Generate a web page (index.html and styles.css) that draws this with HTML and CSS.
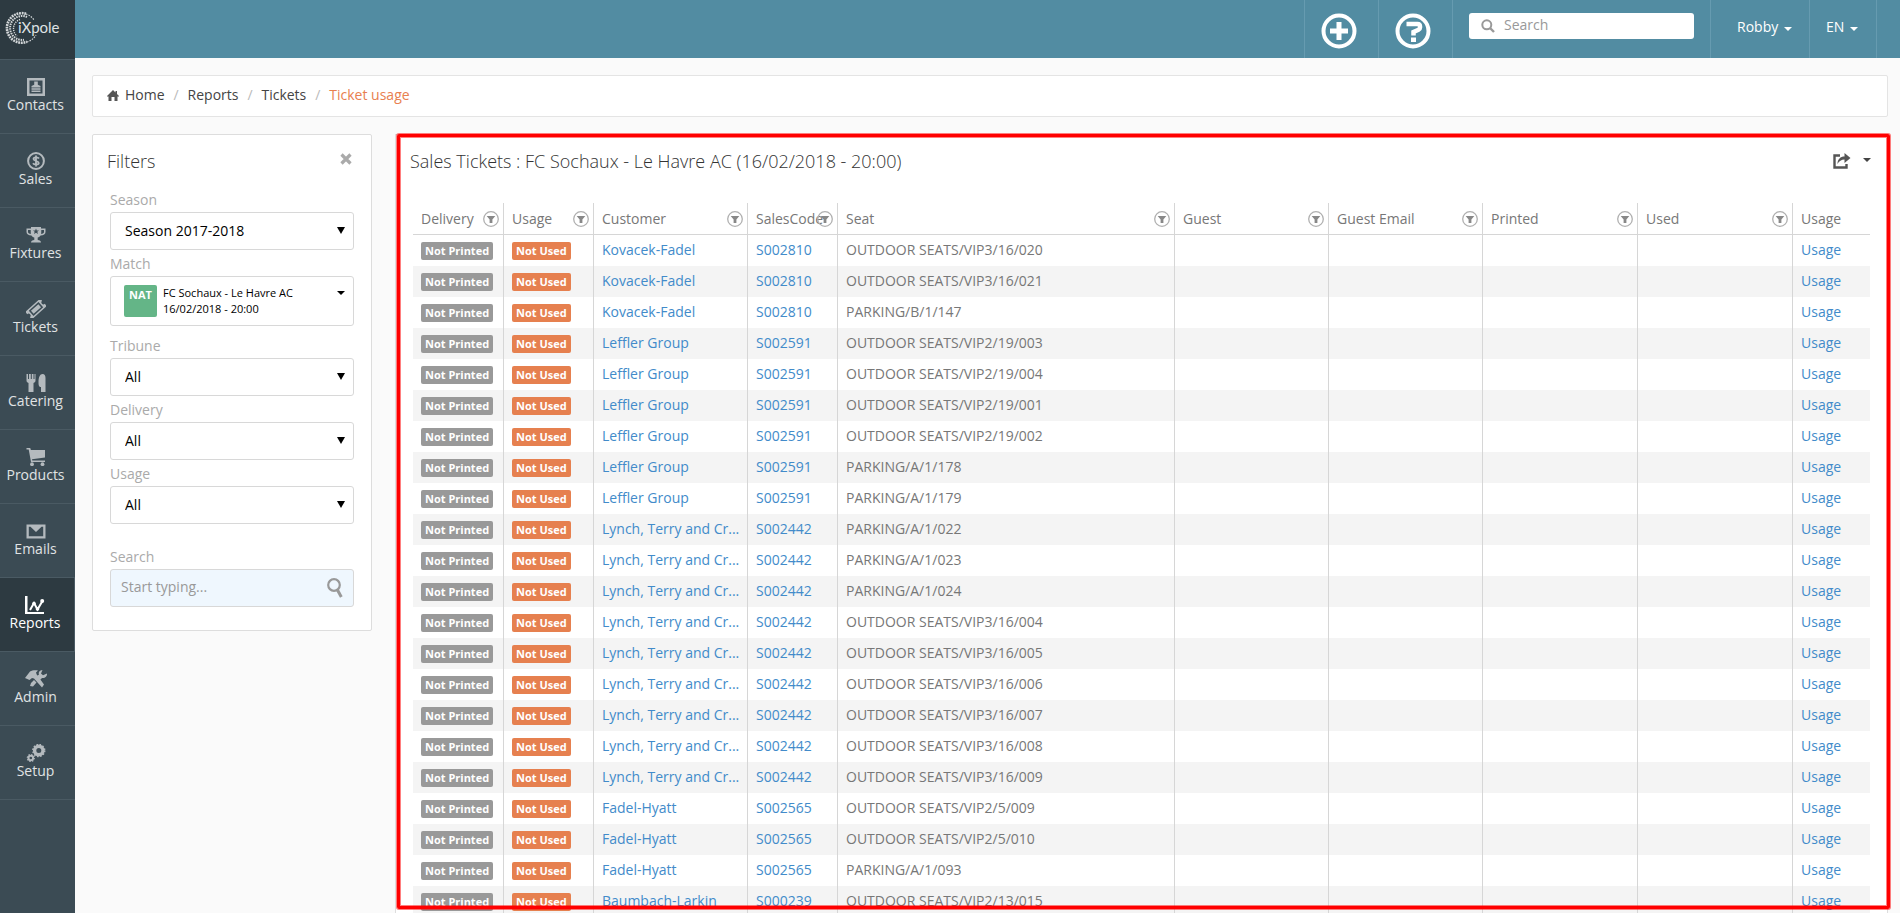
FILE: index.html
```html
<!DOCTYPE html>
<html lang="en">
<head>
<meta charset="utf-8">
<title>Ticket usage</title>
<link rel="stylesheet" href="styles.css">
</head>
<body>
<svg class="defs" aria-hidden="true">
  <symbol id="filter" viewBox="0 0 16 16"><circle cx="8" cy="8" r="7.300" fill="none" stroke="#b0b0b0" stroke-width="1.300"/><path d="M3.700 5h8.600L9.400 8.600V12H6.600V8.600z" fill="#888"/></symbol>
</svg>
<nav class="sidebar">
  <a class="logo" href="#" aria-label="iXpole">
    <svg viewBox="0 0 60 36" width="60" height="36">
      <g fill="none" stroke="#d3d7d9">
        <path d="M22 3.800A14.800 14.800 0 1 0 23 31.800" stroke-width="2.600" stroke-dasharray="1.800 .8"/>
        <path d="M23 7A12 12 0 1 0 20 29.800" stroke-width="2" stroke-dasharray="1.500 .9"/>
        <path d="M16 9.500A9.600 9.600 0 0 0 13 26" stroke-width="1.400" stroke-dasharray="1.200 1"/>
        <path d="M22 4A15 15 0 0 1 30 10M23 32A15 15 0 0 0 32 25" stroke-width="1.200" stroke-dasharray="1.500 1.200"/>
      </g>
      <text class="logo-text" x="14" y="23">iXpole</text>
    </svg>
  </a>
  <a class="item" href="#"><svg viewBox="0 0 20 18"><path fill-rule="evenodd" d="M1 0h18v18H1zM3.500 2.500v13h13v-13z"/><path d="M8.200 3.500h3.600v3.300L14.500 8v1.500h-9V8l2.700-1.200zM5.500 10.300h9v1.500h-9zM5.500 12.600h9v1.500h-9z"/></svg>Contacts</a>
  <a class="item" href="#"><svg viewBox="0 0 20 18"><circle cx="10" cy="9" r="7.900" fill="none" stroke="currentColor" stroke-width="2"/><path d="M13 6.500C12 4.800 7.500 4.800 7.500 7S12.800 8.800 12.800 11 8 13 7 11.300M10 3.500v11" fill="none" stroke="currentColor" stroke-width="1.800"/></svg>Sales</a>
  <a class="item" href="#"><svg viewBox="0 0 20 18"><path fill-rule="evenodd" d="M5 1h10v1.500h4.500V6c0 2-2 3.500-5 3.500-.6 1-1.500 1.700-2.800 2v2.500c2 .3 3.300 1 3.300 2.500H5c0-1.500 1.300-2.200 3.300-2.500v-2.500c-1.300-.3-2.200-1-2.800-2-3 0-5-1.500-5-3.500V2.500H5zM2 4v2c0 1 1.200 1.700 2.800 1.900L4.700 4zM18 4h-2.700l-.1 3.900C16.800 7.700 18 7 18 6zM10 2.500l-.8 2H7l1.700 1.300L8 8l2-1.300L12 8l-.7-2.200L13 4.500h-2.200z"/></svg>Fixtures</a>
  <a class="item" href="#"><svg viewBox="0 0 20 18"><g transform="rotate(-42 10 9)"><path fill-rule="evenodd" d="M0 4h20v3a2 2 0 0 0 0 4v3H0v-3a2 2 0 0 0 0-4zM3.500 5.500v7h13v-7zM5 7h10v4H5z"/></g></svg>Tickets</a>
  <a class="item" href="#"><svg viewBox="0 0 20 18"><path d="M.500 0H2v5h1V0h1.800v5h1V0h1.700v5h1V0H9.500v6.500C9.500 8 8.500 8.500 7.500 9v9h-5V9C1.500 8.500.500 8 .500 6.500zM14 13c-1.300-1-1.500-2-1.500-5 0-5 1.500-8 4-8 2.300 0 3 2 3 4v14H15v-5z"/></svg>Catering</a>
  <a class="item" href="#"><svg viewBox="0 0 20 18"><path d="M.500 0h3.700l.7 2H19v7.500L6 11.300l.3 1.200H19V14H5L2.700 1.500H.500z"/><circle cx="6" cy="16.200" r="1.900"/><circle cx="16.500" cy="16.200" r="1.900"/></svg>Products</a>
  <a class="item" href="#"><svg viewBox="0 0 20 18"><path fill-rule="evenodd" d="M.500 2.500h19v14H.500zM2.800 4.800v9.400h14.400V4.800h-1.700L10 10 4.500 4.800z"/></svg>Emails</a>
  <a class="item active" href="#" aria-current="page"><svg viewBox="0 0 20 18"><path d="M0 0h2.500v16H19v2H0z"/><path d="M5 14l4-7 3.500 6.500L17.500 5" fill="none" stroke="currentColor" stroke-width="2"/><circle cx="9" cy="7.500" r="1.800"/><circle cx="12.500" cy="13" r="1.800"/><circle cx="17.200" cy="5" r="2"/></svg>Reports</a>
  <a class="item" href="#"><svg viewBox="0 0 24 18" class="wide"><path d="M6 1.500C8 .300 11 0 14 .500l-2 2 .7 2L20 14.500 18 17.500l-8-9-2-.5-2.500 2L1 8zM13 6l2-1.500c-.8-2 .5-4.200 3.500-4.500L17 3.500l2 1.800L23 3.500c.3 2.500-2 5-5 4.500l-1.500 1.500zM7 13l3-3 2.500 2.500-3.500 4-3-.5z"/></svg>Admin</a>
  <a class="item" href="#"><svg viewBox="0 0 20 18"><circle cx="12.800" cy="6.500" r="4.200" fill="none" stroke="currentColor" stroke-width="3.400"/><circle cx="12.800" cy="6.500" r="6" fill="none" stroke="currentColor" stroke-width="1.400" stroke-dasharray="1.570 1.570"/><circle cx="4.800" cy="14" r="2.300" fill="none" stroke="currentColor" stroke-width="2"/><circle cx="4.800" cy="14" r="3.500" fill="none" stroke="currentColor" stroke-width="1.200" stroke-dasharray="1.370 1.370"/></svg>Setup</a>
</nav>
<div class="page">
  <header class="topbar">
    <button class="round" aria-label="Add"><svg viewBox="0 0 36 36"><circle cx="18" cy="18" r="15.500" fill="none" stroke="#fff" stroke-width="4"/><path d="M18 9v18M9 18h18" stroke="#fff" stroke-width="5"/></svg></button>
    <button class="round" aria-label="Help"><svg viewBox="0 0 36 36"><circle cx="18" cy="18" r="15.500" fill="none" stroke="#fff" stroke-width="4"/><path d="M11.500 11h11q2.500 0 2.500 2.500v1q0 1.500-1.500 2.200L18.500 19v3.500" fill="none" stroke="#fff" stroke-width="4.500"/><path d="M16 24.500h5V29h-5z" fill="#fff"/></svg></button>
    <div class="search-cell"><label class="search"><svg viewBox="0 0 14 14"><circle cx="5.800" cy="5.800" r="4.500" fill="none" stroke="#999" stroke-width="2"/><path d="M9 9l4 4" stroke="#999" stroke-width="2.400"/></svg><input type="text" placeholder="Search" aria-label="Search"></label></div>
    <button class="menu user">Robby <i class="caret"></i></button>
    <button class="menu lang">EN <i class="caret"></i></button>
  </header>
  <main class="content">
    <nav class="crumbs" aria-label="Breadcrumb">
      <svg viewBox="0 0 12 11"><path d="M6 0l2.500 2.500V1H10v3l2 2v.5h-1.500V11H7.500V7h-3v4h-3V6.500H0V6z" fill="#555"/></svg>
      <a href="#">Home</a><span class="sep">/</span><a href="#">Reports</a><span class="sep">/</span><a href="#">Tickets</a><span class="sep">/</span><span class="current">Ticket usage</span>
    </nav>
    <div class="columns">
      <aside class="filters">
        <div class="filters-head"><h2>Filters</h2><button class="close" aria-label="Close"><svg viewBox="0 0 12 12"><path d="M1.500 1.500l9 9M10.500 1.500l-9 9" stroke="#aaa" stroke-width="3.200"/></svg></button></div>
        <div class="form">
          <label for="season">Season</label>
          <div class="select"><select id="season"><option>Season 2017-2018</option></select></div>
          <label for="match">Match</label>
          <button class="match" id="match"><span class="nat">NAT</span><span class="match-text">FC Sochaux - Le Havre AC<br>16/02/2018 - 20:00</span><i class="caret"></i></button>
          <label for="tribune">Tribune</label>
          <div class="select"><select id="tribune"><option>All</option></select></div>
          <label for="delivery">Delivery</label>
          <div class="select"><select id="delivery"><option>All</option></select></div>
          <label for="usage">Usage</label>
          <div class="select"><select id="usage"><option>All</option></select></div>
          <label for="find" class="find-label">Search</label>
          <div class="find"><input id="find" type="text" placeholder="Start typing..."><svg viewBox="0 0 16 20"><circle cx="7" cy="7" r="5.800" fill="none" stroke="#999" stroke-width="2.200"/><path d="M10.500 12l3.800 7" stroke="#999" stroke-width="3"/></svg></div>
        </div>
      </aside>
      <section class="report">
        <div class="report-head"><h1>Sales Tickets : FC Sochaux - Le Havre AC (16/02/2018 - 20:00)</h1>
          <button class="share" aria-label="Export"><svg viewBox="0 0 18 16"><path d="M7 2.500H1.500v12h12V11" fill="none" stroke="#555" stroke-width="2.400"/><path d="M4.500 11c0-5 3-7.500 7-7.500V0l6 5-6 5V6.500c-3 0-5.500 1.500-7 4.500z" fill="#555"/></svg><i class="caret"></i></button></div>
        <table>
          <colgroup><col class="c-del"><col class="c-90"><col class="c-154"><col class="c-90"><col><col class="c-154"><col class="c-154"><col class="c-155"><col class="c-155"><col class="c-last"></colgroup>
          <thead><tr id="head"></tr></thead>
          <tbody id="rows"></tbody>
        </table>
      </section>
    </div>
  </main>
</div>
<script src="script.js"></script>
</body>
</html>
```
FILE: styles.css
```css
*, *::before, *::after { box-sizing: border-box; }
body { margin: 0; height: 100vh; overflow: hidden; display: flex; font: 14px/20px "Open Sans", "Liberation Sans", sans-serif; color: #777; background: #fafafa; }
button, input, select { font: inherit; color: inherit; }
button { border: 0; background: none; padding: 0; cursor: pointer; }
a { color: #428bca; text-decoration: none; }
h1, h2 { margin: 0; font-size: 18px; line-height: 24px; font-weight: 300; color: #333; }
.defs { position: absolute; width: 0; height: 0; }
.caret { display: inline-block; border: 4px solid transparent; border-top-color: currentColor; border-bottom: 0; }

.sidebar { flex: none; width: 75px; background: #3b4b54; }
.logo { display: block; height: 60px; padding: 10px 0 0 4px; background: #2d3a41; border-bottom: 1px solid #4a5a63; }
.logo-text { font-family: Lato, sans-serif; font-size: 15px; fill: #dfe2e4; }
.item { display: flex; flex-direction: column; align-items: center; height: 74px; padding: 18px 4px 0 0; border-bottom: 1px solid #4a5a63; color: #e0e3e4; line-height: 18px; }
.item svg { width: 20px; height: 18px; fill: currentColor; color: #b4babe; }
.item svg.wide { width: 24px; }
.item.active { background: #2d3a41; color: #fff; border-right: 1px solid #4a5a63; }
.item.active svg { color: #fff; }

.page { flex: 1; min-width: 0; }
.topbar { display: flex; justify-content: flex-end; height: 58px; padding-right: 23px; background: #528ca2; color: #fff; }
.topbar > * { border-left: 1px solid #669bb0; }
.round { width: 74px; padding-top: 4px; }
.round svg { display: block; width: 36px; height: 36px; margin-left: 16px; }
.search-cell { width: 258px; padding: 13px 16px; }
.search { display: flex; align-items: center; width: 225px; height: 26px; padding-left: 12px; border-radius: 3px; background: #fff; color: #999; }
.search svg { flex: none; width: 14px; height: 14px; margin-right: 9px; }
.search input { width: 100%; height: 22px; border: 0; padding: 0 0 3px; background: none; outline: 0; }
input::placeholder { color: #999; opacity: 1; }
.menu { text-align: left; padding-bottom: 4px; }
.user { width: 99px; padding-left: 26px; }
.lang { width: 68px; padding-left: 16px; border-right: 1px solid #669bb0; }
.menu .caret { margin-left: 2px; vertical-align: 1px; }

.content { padding: 17px 12px 0 17px; }
.crumbs { display: flex; align-items: center; height: 42px; padding: 0 14px 2px; border: 1px solid #e4e4e4; border-radius: 2px; background: #fff; }
.crumbs a { color: #444; }
.crumbs svg { width: 12px; height: 11px; margin-right: 6px; }
.crumbs .sep { width: 23px; text-align: center; color: #bbb; }
.crumbs .current { color: #e8804f; }
.columns { display: flex; align-items: flex-start; gap: 23px; margin-top: 17px; }

.filters { flex: none; width: 280px; padding: 14px 17px 23px; border: 1px solid #ddd; border-radius: 2px; background: #fff; }
.filters-head { display: flex; justify-content: space-between; align-items: center; margin-left: -3px; }
.close { width: 16px; height: 16px; margin: 0 0 4px; }
.close svg { width: 12px; height: 12px; display: block; margin: 2px auto; }
.form { padding-top: 17px; }
.form label { display: block; height: 22px; color: #aaa; }
.select { position: relative; margin-bottom: 4px; }
.select select { display: block; width: 100%; height: 38px; padding: 0 14px 1px; border: 1px solid #d8d8d8; border-radius: 3px; background: #fff; color: #000; appearance: none; }
.select::after { content: ""; position: absolute; right: 9px; top: 15px; border: 4px solid transparent; border-top: 7px solid #000; border-bottom: 0; pointer-events: none; }
.match { display: flex; width: 100%; height: 50px; padding: 8px 8px 0 13px; margin-bottom: 10px; border: 1px solid #d8d8d8; border-radius: 3px; color: #000; text-align: left; font-size: 11px; line-height: 16px; }
.nat { flex: none; width: 33px; height: 32px; padding-top: 2px; margin-right: 6px; border-radius: 2px; background: #64b587; color: #fff; font-size: 11px; font-weight: 700; text-align: center; }
.match-text { flex: 1; }
.match .caret { margin-top: 6px; }
.form .find-label { margin-top: 23px; }
.find { position: relative; }
.find input { display: block; width: 100%; height: 38px; padding: 0 40px 3px 10px; border: 1px solid #d8d8d8; border-radius: 3px; background: #eff7fe; }
.find svg { position: absolute; right: 11px; top: 9px; width: 16px; height: 20px; }

.report { position: relative; flex: 1; min-width: 0; padding: 14px 17px 0; border: 1px solid #ddd; background: #fff; }
.report::after { content: ""; position: absolute; left: 1px; right: -3px; top: -1px; height: 775px; border: 3px solid #f00; border-radius: 2px; box-shadow: 0 0 0 1px rgba(255, 0, 0, .5), inset 0 0 0 1px rgba(255, 0, 0, .5); pointer-events: none; }
.report-head { display: flex; justify-content: space-between; margin: 0 -1px 30px -3px; }
.share { display: flex; align-items: center; gap: 12px; color: #444; height: 24px; }
.share svg { width: 18px; height: 16px; }
.share .caret { margin-bottom: 3px; }
table { width: 100%; table-layout: fixed; border-collapse: separate; border-spacing: 0; }
.c-del { width: 91px; }
.c-90 { width: 90px; }
.c-154 { width: 154px; }
.c-155 { width: 155px; }
.c-last { width: 77px; }
th, td { height: 31px; padding: 0 0 1px 8px; border-right: 1px solid #d6d6d6; text-align: left; font-weight: 400; white-space: nowrap; }
th:last-child, td:last-child { border-right: 0; }
th { height: 32px; padding: 0; border-bottom: 1px solid #d6d6d6; }
.th { display: flex; align-items: center; padding-left: 8px; }
.th span { flex: 1; width: 0; }
.th svg { flex: none; width: 16px; height: 16px; margin-right: 4px; }
tbody tr:nth-child(even) { background: #f4f4f4; }
.tag { display: inline-block; height: 18px; padding: 0 4px; border-radius: 2px; color: #fff; font-size: 11px; line-height: 18px; font-weight: 700; vertical-align: middle; }
.grey { background: #999; }
.orange { background: #e6804f; }
```
FILE: script.js
```js
const columns = ['Delivery', 'Usage', 'Customer', 'SalesCode', 'Seat', 'Guest', 'Guest Email', 'Printed', 'Used', 'Usage'];
const funnel = '<svg aria-hidden="true"><use href="#filter"/></svg>';
document.getElementById('head').innerHTML = columns
  .map((c, i) => `<th scope="col"><div class="th"><span>${c}</span>${i < 9 ? funnel : ''}</div></th>`).join('');

const orders = [
  ['Kovacek-Fadel', 'S002810', ['OUTDOOR SEATS/VIP3/16/020', 'OUTDOOR SEATS/VIP3/16/021', 'PARKING/B/1/147']],
  ['Leffler Group', 'S002591', ['OUTDOOR SEATS/VIP2/19/003', 'OUTDOOR SEATS/VIP2/19/004', 'OUTDOOR SEATS/VIP2/19/001', 'OUTDOOR SEATS/VIP2/19/002', 'PARKING/A/1/178', 'PARKING/A/1/179']],
  ['Lynch, Terry and Cr...', 'S002442', ['PARKING/A/1/022', 'PARKING/A/1/023', 'PARKING/A/1/024', 'OUTDOOR SEATS/VIP3/16/004', 'OUTDOOR SEATS/VIP3/16/005', 'OUTDOOR SEATS/VIP3/16/006', 'OUTDOOR SEATS/VIP3/16/007', 'OUTDOOR SEATS/VIP3/16/008', 'OUTDOOR SEATS/VIP3/16/009']],
  ['Fadel-Hyatt', 'S002565', ['OUTDOOR SEATS/VIP2/5/009', 'OUTDOOR SEATS/VIP2/5/010', 'PARKING/A/1/093']],
  ['Baumbach-Larkin', 'S000239', ['OUTDOOR SEATS/VIP2/13/015']]
];
document.getElementById('rows').innerHTML = orders.flatMap(([name, code, seats]) => seats.map(seat =>
  `<tr><td><span class="tag grey">Not Printed</span></td><td><span class="tag orange">Not Used</span></td>` +
  `<td><a href="#">${name}</a></td><td><a href="#">${code}</a></td><td>${seat}</td>` +
  `<td></td><td></td><td></td><td></td><td><a href="#">Usage</a></td></tr>`)).join('');
```
